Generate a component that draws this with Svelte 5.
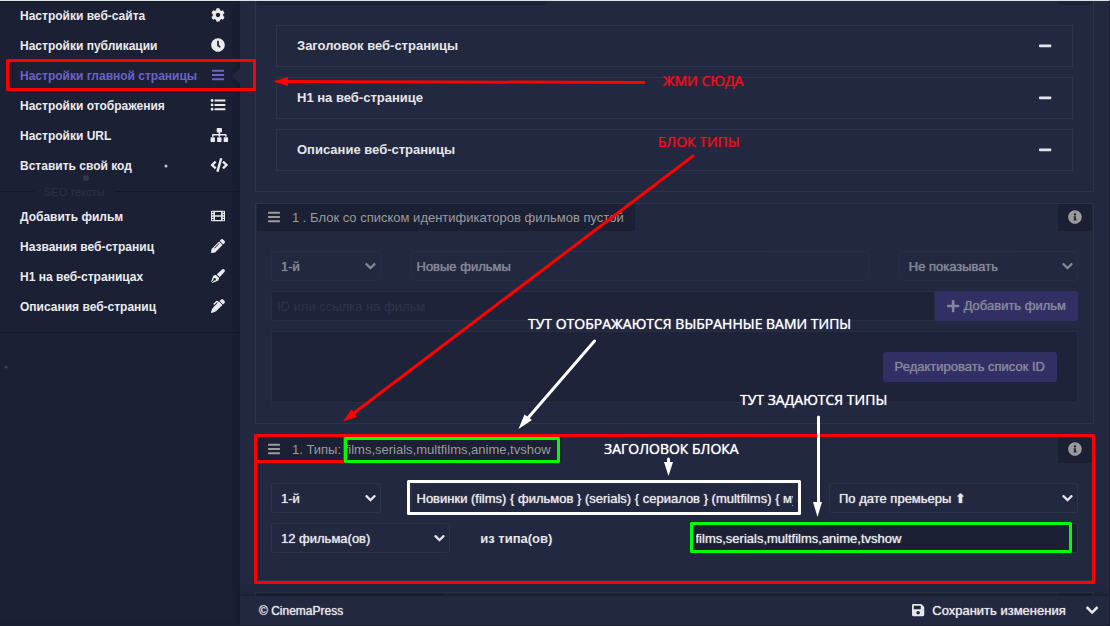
<script>
  const shapes = {
    cog: { box: '0 0 512 512', d: 'M487.4 315.7l-42.6-24.6c4.3-23.2 4.3-47 0-70.2l42.6-24.6c4.9-2.8 7.1-8.6 5.5-14-11.1-35.6-30-67.8-54.7-94.6-3.8-4.1-10-5.1-14.8-2.3L380.8 110c-17.9-15.4-38.5-27.3-60.8-35.1V25.8c0-5.6-3.9-10.5-9.4-11.7-36.7-8.2-74.3-7.8-109.2 0-5.5 1.2-9.4 6.1-9.4 11.7V75c-22.2 7.9-42.8 19.8-60.8 35.1L88.7 85.5c-4.9-2.8-11-1.9-14.8 2.3-24.7 26.7-43.6 58.9-54.7 94.6-1.7 5.4.6 11.2 5.5 14L67.3 221c-4.3 23.2-4.3 47 0 70.2l-42.6 24.6c-4.9 2.8-7.1 8.6-5.5 14 11.1 35.6 30 67.8 54.7 94.6 3.8 4.1 10 5.1 14.8 2.3l42.6-24.6c17.9 15.4 38.5 27.3 60.8 35.1v49.2c0 5.6 3.9 10.5 9.4 11.7 36.7 8.2 74.3 7.8 109.2 0 5.5-1.2 9.4-6.1 9.4-11.7v-49.2c22.2-7.9 42.8-19.8 60.8-35.1l42.6 24.6c4.9 2.8 11 1.9 14.8-2.3 24.7-26.7 43.6-58.9 54.7-94.6 1.5-5.5-.7-11.3-5.6-14.1zM256 336c-44.1 0-80-35.9-80-80s35.9-80 80-80 80 35.9 80 80-35.9 80-80 80z' },
    clock: { box: '0 0 512 512', d: 'M256,8C119,8,8,119,8,256S119,504,256,504,504,393,504,256,393,8,256,8Zm92.49,313h0l-20,25a16,16,0,0,1-22.49,2.5h0l-67-49.72a40,40,0,0,1-15-31.23V112a16,16,0,0,1,16-16h32a16,16,0,0,1,16,16V256l58,42.5A16,16,0,0,1,348.49,321Z' },
    bars: { box: '0 0 448 512', d: 'M16 60h416q16 0 16 16v44q0 16-16 16H16q-16 0-16-16V76q0-16 16-16zM16 218h416q16 0 16 16v44q0 16-16 16H16q-16 0-16-16v-44q0-16 16-16zM16 376h416q16 0 16 16v44q0 16-16 16H16q-16 0-16-16v-44q0-16 16-16z' },
    list: { box: '0 0 512 512', d: 'M40 40a52 52 0 1 0 0 104 52 52 0 0 0 0-104zm0 160a52 52 0 1 0 0 104 52 52 0 0 0 0-104zm0 160a52 52 0 1 0 0 104 52 52 0 0 0 0-104zM144 56h368q16 0 16 16v44q0 16-16 16H144q-16 0-16-16V72q0-16 16-16zm0 160h368q16 0 16 16v44q0 16-16 16H144q-16 0-16-16v-44q0-16 16-16zm0 160h368q16 0 16 16v44q0 16-16 16H144q-16 0-16-16v-44q0-16 16-16z' },
    sitemap: { box: '-48 0 640 512', d: 'M32 336h96q32 0 32 32v112q0 32-32 32H32q-32 0-32-32V368q0-32 32-32zm240 0h96q32 0 32 32v112q0 32-32 32h-96q-32 0-32-32V368q0-32 32-32zm240 0h96q32 0 32 32v112q0 32-32 32h-96q-32 0-32-32V368q0-32 32-32zM256 0h128q32 0 32 32v96q0 32-32 32h-36v56h196q44 0 44 44v60h-56v-48H348v48h-56v-48H108v48H52v-60q0-44 44-44h196v-56h-36q-32 0-32-32V32q0-32 32-32z' },
    code: { box: '-48 0 640 512', d: 'M279 512l-61-18q-12-4-8-15L346 9q3-12 15-9l61 18q12 4 8 15L294 503q-3 12-15 9zM165 400l43-47q8-9-1-17l-91-80 91-80q9-8 1-17l-43-47q-8-8-17 0L4 247q-8 9 0 17l144 136q9 8 17 0zm327 0l144-136q8-8 0-17L492 112q-9-8-17 0l-43 47q-8 9 1 17l91 80-91 80q-9 8-1 17l43 47q8 8 17 0z' },
    film: { box: '0 0 512 512', d: 'M24 64h464q24 0 24 24v336q0 24-24 24H24q-24 0-24-24V88q0-24 24-24zM36 100v40h52v-40zm0 90v40h52v-40zm0 90v40h52v-40zm0 90v40h52v-40zM424 100v40h52v-40zm0 90v40h52v-40zm0 90v40h52v-40zm0 90v40h52v-40zM144 108v124h224V108zm0 172v124h224V280z' },
    pencil: { box: '0 0 512 512', d: 'M497.9 142.1l-46.1 46.1c-4.7 4.7-12.3 4.7-17 0l-111-111c-4.7-4.7-4.7-12.3 0-17l46.1-46.1c18.7-18.7 49.1-18.7 67.9 0l60.1 60.1c18.8 18.7 18.8 49.1 0 67.9zM284.2 99.8L21.6 362.4.4 483.9c-2.9 16.4 11.4 30.6 27.8 27.8l121.5-21.3 262.6-262.6c4.7-4.7 4.7-12.3 0-17l-111-111c-4.8-4.7-12.4-4.7-17.1 0zM124.1 339.9c-5.5-5.5-5.5-14.3 0-19.8l154-154c5.5-5.5 14.3-5.5 19.8 0s5.5 14.3 0 19.8l-154 154c-5.5 5.5-14.3 5.5-19.8 0z' },
    nib: { box: '0 0 512 512', d: 'M490 22q44 44 0 90L330 286q-10 12-22 2l-84-82q-10-10 2-22L400 22q46-44 90 0zM190 226l98 98q8 8 4 20l-22 70q-4 14-18 20L42 510q-12 4-20-2l92-92q40 16 62-14 20-40-18-66-40-20-66 14-14 22-4 50L4 488q-6-8-2-20L78 260q6-14 20-18l70-20q12-4 22 4z' },
    marker: { box: '0 0 512 512', d: 'M497 142l-48 50q-8 8-17 0L322 82q-9-8 0-17l48-50q34-28 68 0l59 59q28 34 0 68zM302 102l108 108q8 8 0 17L196 440Q140 486 28 512q-28 4-28-26 22-122 78-178L246 140l-28-22-92 92q-12 8-22 0l-14-14q-8-10 0-20L192 74q26-24 54 0l40 34q8-12 16-6z' },
    plus: { box: '0 0 448 512', d: 'M416 208H272V64q0-32-32-32h-32q-32 0-32 32v144H32q-32 0-32 32v32q0 32 32 32h144v144q0 32 32 32h32q32 0 32-32V304h144q32 0 32-32v-32q0-32-32-32z' },
    minus: { box: '0 0 448 512', d: 'M32 200h384q32 0 32 32v36q0 32-32 32H32q-32 0-32-32v-36q0-32 32-32z' },
    info: { box: '0 0 512 512', d: 'M256 8C119.043 8 8 119.083 8 256c0 136.997 111.043 248 248 248s248-111.003 248-248C504 119.083 392.957 8 256 8zm0 110c23.196 0 42 18.804 42 42s-18.804 42-42 42-42-18.804-42-42 18.804-42 42-42zm56 254c0 6.627-5.373 12-12 12h-88c-6.627 0-12-5.373-12-12v-24c0-6.627 5.373-12 12-12h12v-64h-12c-6.627 0-12-5.373-12-12v-24c0-6.627 5.373-12 12-12h64c6.627 0 12 5.373 12 12v100h12c6.627 0 12 5.373 12 12v24z' },
    save: { box: '0 0 448 512', d: 'M433.941 129.941l-83.882-83.882A48 48 0 0 0 316.118 32H48C21.49 32 0 53.49 0 80v352c0 26.51 21.49 48 48 48h352c26.51 0 48-21.49 48-48V163.882a48 48 0 0 0-14.059-33.941zM224 416c-35.346 0-64-28.654-64-64 0-35.346 28.654-64 64-64s64 28.654 64 64c0 35.346-28.654 64-64 64zm96-304.52V212c0 6.627-5.373 12-12 12H76c-6.627 0-12-5.373-12-12V108c0-6.627 5.373-12 12-12h228.52c3.183 0 6.235 1.264 8.485 3.515l3.48 3.48A11.996 11.996 0 0 1 320 111.48z' },
    chevron: { box: '0 0 448 512', d: 'M205 395L8 198q-17-17 0-34l32-33q17-16 34 0l150 148 150-148q17-16 34 0l32 33q17 17 0 34L243 395q-19 17-38 0z' }
  };

  const settings = [
    { label: 'Настройки веб-сайта', icon: 'cog' },
    { label: 'Настройки публикации', icon: 'clock' },
    { label: 'Настройки главной страницы', icon: 'bars', active: true },
    { label: 'Настройки отображения', icon: 'list' },
    { label: 'Настройки URL', icon: 'sitemap' },
    { label: 'Вставить свой код', icon: 'code' }
  ];
  const seo = [
    { label: 'Добавить фильм', icon: 'film' },
    { label: 'Названия веб-страниц', icon: 'pencil' },
    { label: 'H1 на веб-страницах', icon: 'nib' },
    { label: 'Описания веб-страниц', icon: 'marker' }
  ];
  const sections = ['Заголовок веб-страницы', 'H1 на веб-странице', 'Описание веб-страницы'];

  let heading = $state('Новые фильмы');
  let title = $state('Новинки (films) { фильмов } (serials) { сериалов } (multfilms) { мультфильмов } (anime) { аниме }');
  let types = $state('films,serials,multfilms,anime,tvshow');
</script>

{#snippet icon(name)}
  <svg class="icon" viewBox={shapes[name].box} aria-hidden="true"><path fill-rule="evenodd" d={shapes[name].d} /></svg>
{/snippet}

{#snippet menu(items)}
  <ul>
    {#each items as item}
      <li>
        <a href="#top" class:active={item.active}>
          <span>{item.label}</span>
          {@render icon(item.icon)}
        </a>
      </li>
    {/each}
  </ul>
{/snippet}

{#snippet choice(label, text)}
  <div class="choice">
    <select aria-label={label}><option>{text}</option></select>
    {@render icon('chevron')}
  </div>
{/snippet}

<div class="page">
  <nav>
    {@render menu(settings)}
    <div class="divider"><span>SEO тексты</span></div>
    {@render menu(seo)}
  </nav>

  <div class="main">
    <main>
      <section class="panel first">
        <div class="head"><div class="tab stub"></div><div class="info"></div></div>
        <div class="accordion">
          {#each sections as name}
            <button class="fold"><span>{name}</span>{@render icon('minus')}</button>
          {/each}
        </div>
      </section>

      <section class="panel">
        <div class="head">
          <div class="tab">{@render icon('bars')}<span>1 . Блок со списком идентификаторов фильмов пустой</span></div>
          <button class="info" aria-label="Info">{@render icon('info')}</button>
        </div>
        <div class="rows dim">
          <div class="grid">
            <div class="c2">{@render choice('Позиция', '1-й')}</div>
            <input class="c7" aria-label="Заголовок" bind:value={heading} />
            <div class="c3">{@render choice('Показ', 'Не показывать')}</div>
          </div>
          <div class="group">
            <input aria-label="ID" placeholder="ID или ссылка на фильм" />
            <button class="primary">{@render icon('plus')}Добавить фильм</button>
          </div>
          <div class="well"><button class="primary">Редактировать список ID</button></div>
        </div>
      </section>

      <section class="panel types">
        <div class="head">
          <div class="tab">{@render icon('bars')}<span>1. Типы: films,serials,multfilms,anime,tvshow</span></div>
          <button class="info" aria-label="Info">{@render icon('info')}</button>
        </div>
        <div class="rows">
          <div class="grid">
            <div class="c2">{@render choice('Позиция', '1-й')}</div>
            <input class="c6" aria-label="Заголовок" bind:value={title} />
            <div class="c4">{@render choice('Сортировка', 'По дате премьеры ⬆')}</div>
          </div>
          <div class="grid">
            <div class="c3">{@render choice('Количество', '12 фильма(ов)')}</div>
            <label class="c3" for="types">из типа(ов)</label>
            <input class="c6 dark" id="types" bind:value={types} />
          </div>
        </div>
      </section>

      <section class="panel">
        <div class="head"><div class="tab next"></div><div class="info"></div></div>
      </section>
    </main>

    <footer>
      <span>© CinemaPress</span>
      <button class="save">{@render icon('save')}Сохранить изменения</button>
      <button class="more" aria-label="More">{@render icon('chevron')}</button>
    </footer>
  </div>

  <svg class="marks" width="1110" height="626" aria-hidden="true">
    <g fill="#3a405a"><circle cx="86" cy="178" r="3" opacity=".7" /><circle cx="6" cy="367" r="1.5" /></g>
    <circle cx="166" cy="166" r="1.5" fill="#c5c7cf" />
    <g fill="none" stroke="#f00" stroke-width="3" stroke-linejoin="round" stroke-linecap="round">
      <rect x="7.500" y="60.500" width="247" height="29" />
      <rect x="255.500" y="435.500" width="838" height="147" />
      <path d="M256 461.500H343M344.500 437V461" />
      <path d="M284 81.500L644 82.500M693 156L354 413" />
    </g>
    <path d="M273 81.500l15-4.500v9zM343 421.500l8.500-12.500 5.500 8z" fill="#f00" />
    <g fill="none" stroke="#fff" stroke-width="3" stroke-linecap="round">
      <path d="M594.500 341L528 418M818.500 417V503M668.500 459v4" />
      <rect x="408.500" y="481.500" width="391" height="32" stroke-linejoin="round" />
    </g>
    <path d="M518.500 429l6-14.500 7.500 5.500zM817.500 517l-4.500-15h9zM668.500 476l-4.500-14h9z" fill="#fff" />
    <g fill="none" stroke="#0f0" stroke-width="3" stroke-linejoin="round">
      <rect x="345.500" y="438.500" width="213" height="23" />
      <rect x="691.500" y="523.500" width="379" height="28" />
    </g>
  </svg>
  <span class="note red n1">ЖМИ СЮДА</span>
  <span class="note red n2">БЛОК ТИПЫ</span>
  <span class="note n3">ТУТ ОТОБРАЖАЮТСЯ ВЫБРАННЫЕ ВАМИ ТИПЫ</span>
  <span class="note n4">ТУТ ЗАДАЮТСЯ ТИПЫ</span>
  <span class="note n5">ЗАГОЛОВОК БЛОКА</span>
</div>

<style>
  :global(body) { background: #222840; }
  * { box-sizing: border-box; }
  .page {
    position: relative;
    display: flex;
    height: 100vh;
    overflow: hidden;
    border-top: 1px solid #dbe3e3;
    border-right: 1px solid #191e32;
    border-bottom: 1px solid #191e32;
    background: #222840;
    color: #e6e6e8;
    font: 13px/20px "Liberation Sans", Arial, sans-serif;
  }
  button, input, select {
    margin: 0;
    font: inherit;
    color: inherit;
    background: none;
    border: 0;
  }
  .icon { flex: none; height: 14px; overflow: visible; fill: currentColor; }
  nav {
    flex: 0 0 240px;
    background: #1b2035;
    box-shadow: inset -6px 0 6px -4px #161a2c;
  }
  nav ul { margin: 0; padding: 0; list-style: none; }
  nav ul:last-child { padding-bottom: 10px; border-bottom: 1px solid #12162a; }
  nav a {
    position: relative;
    display: flex;
    align-items: center;
    justify-content: space-between;
    height: 30px;
    padding: 0 12px 0 20px;
    color: #ebebed;
    font-size: 12px;
    font-weight: bold;
    text-decoration: none;
    white-space: nowrap;
  }
  nav a .icon { width: 20px; margin-bottom: 2px; }
  nav a.active { color: #6b63c9; }
  nav a.active::after {
    content: '';
    position: absolute;
    right: 0;
    top: 7px;
    border: 8px solid transparent;
    border-left: 0;
    border-right-color: #222840;
  }
  .divider {
    display: flex;
    align-items: center;
    gap: 10px;
    height: 21px;
    color: #2a3048;
    font-size: 11px;
  }
  .divider::before, .divider::after { content: ''; height: 1px; background: #12162a; }
  .divider::before { width: 34px; }
  .divider::after { flex: 1; }
  .main { flex: 1; min-width: 0; display: flex; flex-direction: column; }
  main {
    flex: 1;
    min-height: 0;
    overflow: hidden;
    display: flex;
    flex-direction: column;
    gap: 11px;
    padding: 0 15px;
  }
  .panel { flex: none; border: 1px solid #2d3448; }
  .head { display: flex; justify-content: space-between; padding: 0 1px; }
  .tab, .info { display: flex; align-items: center; height: 27px; background: #1b2035; color: #9b9b9b; }
  .tab { gap: 12px; padding: 0 11px; }
  .tab .icon { width: 12px; }
  .tab .icon, .info .icon { margin-bottom: 2px; }
  .info { justify-content: center; width: 34px; padding: 0; }
  .first { border-top: 0; padding-bottom: 20px; }
  .first .tab, .first .info { height: 4px; background: #1b2437; }
  .stub { width: 289px; }
  .next { width: 188px; }
  .accordion { display: grid; gap: 10px; margin: 20px 20px 0; }
  .fold {
    display: flex;
    align-items: center;
    justify-content: space-between;
    height: 42px;
    padding: 0 21px 0 20px;
    border: 1px solid #2d3448;
    font-weight: bold;
  }
  .fold .icon { margin-bottom: 1px; }
  .rows { display: grid; gap: 10px; padding: 20px 15px; }
  .types .rows { padding-bottom: 27px; }
  .dim > .grid { opacity: .5; }
  .grid { display: grid; grid-template-columns: repeat(12, minmax(0, 1fr)); gap: 30px; }
  .c2 { grid-column: span 2; }
  .c3 { grid-column: span 3; }
  .c4 { grid-column: span 4; }
  .c6 { grid-column: span 6; }
  .c7 { grid-column: span 7; }
  label { line-height: 32px; height: 30px; font-weight: bold; }
  input, select {
    min-width: 0;
    width: 100%;
    height: 30px;
    padding: 0 5px;
    border: 1px solid #2d3448;
    border-radius: 3px;
    text-shadow: 0 0 1px;
  }
  select { appearance: none; padding: 1px 9px 0; }
  .choice { position: relative; display: grid; }
  .choice .icon { position: absolute; right: 5px; top: 9px; width: 11px; height: 12px; pointer-events: none; }
  .dark { background: #1b2035; }
  .group { display: flex; }
  .group input { flex: 1; border-color: #272d42; border-radius: 3px 0 0 3px; background: #1e2339; }
  .group .primary { border-radius: 0 3px 3px 0; }
  ::placeholder { color: #2d334b; opacity: 1; text-shadow: none; }
  .primary {
    display: flex;
    align-items: center;
    gap: 4px;
    height: 30px;
    padding: 0 12px;
    border-radius: 3px;
    background: #312f64;
    color: #84869a;
    text-shadow: 0 0 1px;
  }
  .well {
    display: flex;
    justify-content: flex-end;
    padding: 20px;
    border: 1px solid #272d42;
    background: #1e2339;
  }
  footer {
    position: relative;
    display: flex;
    align-items: center;
    height: 29px;
    padding: 0 11px 0 19px;
    background: #222840;
    box-shadow: 0 -1px 5px #171b2c;
    font-size: 12px;
    text-shadow: 0 0 1px;
  }
  footer button { display: flex; align-items: center; padding: 0; text-shadow: inherit; }
  footer .icon { margin-bottom: 1px; }
  .save { gap: 8px; margin-left: auto; font-size: 13px; }
  .more { margin-left: 20px; }
  .marks { position: absolute; left: 0; top: -1px; pointer-events: none; }
  .note {
    position: absolute;
    color: #fff;
    font: 500 14px/18px "Open Sans", sans-serif;
    text-shadow: 0 0 1px;
    white-space: nowrap;
    pointer-events: none;
  }
  .red { color: #f0101a; }
  .n1 { left: 663px; top: 71px; }
  .n2 { left: 658px; top: 132px; }
  .n3 { left: 528px; top: 314px; }
  .n4 { left: 740px; top: 390px; }
  .n5 { left: 604px; top: 439px; }
</style>
